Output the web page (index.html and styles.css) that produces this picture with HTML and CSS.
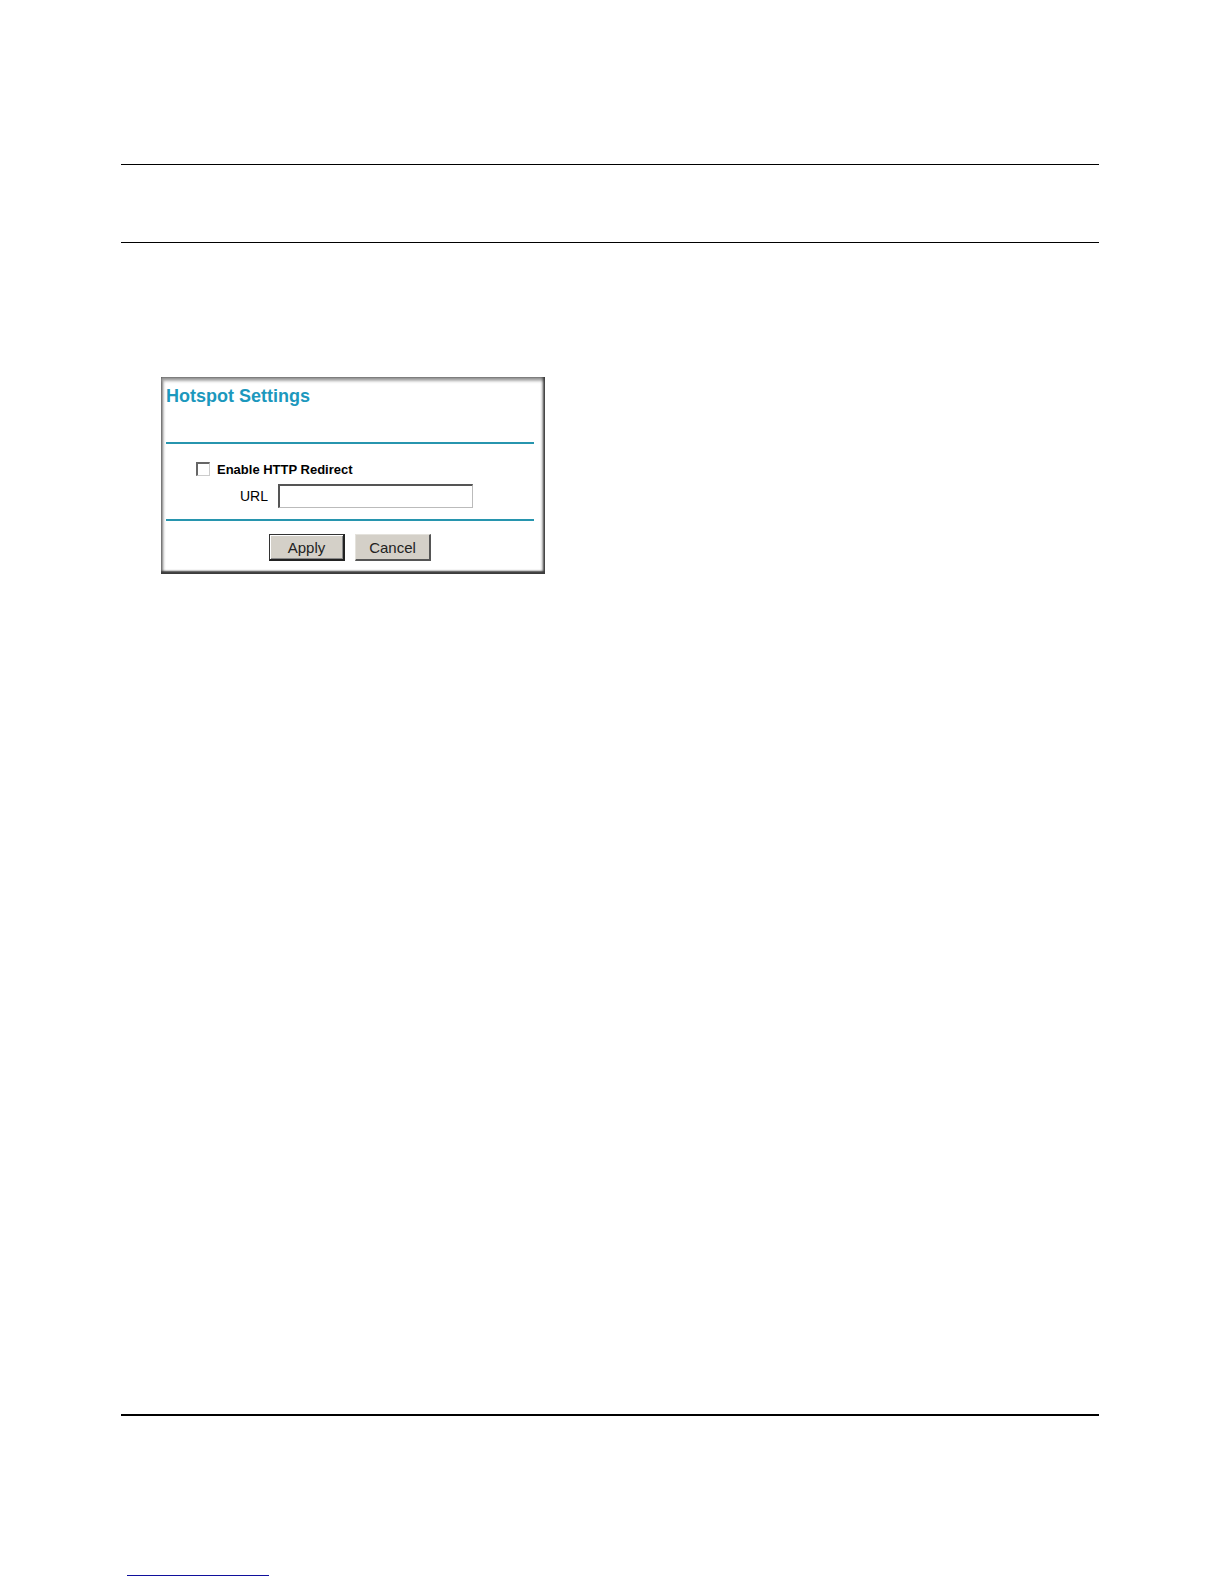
FILE: index.html
```html
<!DOCTYPE html>
<html lang="en">
<head>
    <meta charset="UTF-8">
    <meta name="viewport" content="width=device-width, initial-scale=1.0">
    <title>Hotspot Settings</title>
    <link rel="stylesheet" href="styles.css">
</head>
<body>

<div class="page">
    <header class="page-header"></header>

    <main class="content">
        <form class="panel">
            <h1>Hotspot Settings</h1>

            <div class="fields">
                <div class="check-row">
                    <input type="checkbox" id="redirect" class="checkbox">
                    <label for="redirect">Enable HTTP Redirect</label>
                </div>
                <div class="url-row">
                    <label for="url">URL</label>
                    <input type="text" id="url" class="url-input">
                </div>
            </div>

            <div class="buttons">
                <button type="button" class="default">Apply</button>
                <button type="button">Cancel</button>
            </div>
        </form>
    </main>

    <footer class="page-footer">
        <div class="link-line"></div>
    </footer>
</div>

</body>
</html>
```
FILE: styles.css
```css
* {
    box-sizing: border-box;
}
body {
    margin: 0;
    font-family: "Liberation Sans", Arial, sans-serif;
    background-color: white;
    color: black;
}
.page {
    display: flex;
    flex-direction: column;
    min-height: 100vh;
    padding: 164px 125px 8px 121px;
}
.page-header {
    height: 79px;
    border-top: 1px solid black;
    border-bottom: 1px solid black;
}
.content {
    flex: 1;
    padding: 134px 40px 40px;
}

/* Settings panel */
.panel {
    width: 100%;
    max-width: 384px;
    padding: 8px 11px 13px 5px;
    box-shadow: inset 0 -3px 2px #3c3c3c, inset -2px 0 3px #333, inset 0 4px 3px #a8a8a8, inset 2px 0 3px #777;
}
h1 {
    margin: 0;
    height: 57px;
    font-size: 18px;
    line-height: 22px;
    color: #1c98bd;
}
.fields {
    padding: 17px 0 11px 30px;
    border-top: 2px solid #2795ae;
    border-bottom: 2px solid #2795ae;
    font-size: 14px;
}
.check-row {
    display: flex;
    align-items: center;
    gap: 7px;
    height: 16px;
    font-size: 13px;
    font-weight: bold;
}
.checkbox {
    appearance: none;
    width: 14px;
    height: 14px;
    margin: 0;
    border: 1px solid #ccc;
    border-top: 2px solid #666;
    border-left: 2px solid #666;
}
.checkbox:checked {
    background-color: #333;
}
.url-row {
    display: flex;
    align-items: center;
    gap: 10px;
    margin-top: 7px;
    padding-left: 44px;
}
.url-input {
    width: 195px;
    height: 24px;
    padding: 2px 4px;
    border: 1px solid #bbb;
    border-top: 2px solid #555;
    border-left: 2px solid #555;
    background-color: white;
}
.buttons {
    display: flex;
    justify-content: center;
    gap: 10px;
    padding-top: 13px;
}
button {
    width: 76px;
    height: 27px;
    padding: 0;
    border: 1px solid #e4e2dc;
    border-right: 2px solid #555;
    border-bottom: 2px solid #555;
    background-color: #d4d0c8;
    font-family: inherit;
    font-size: 15px;
    color: #222;
}
.default {
    border: 1px solid #333;
    border-right: 2px solid #222;
    border-bottom: 2px solid #222;
    box-shadow: inset 1px 1px white, inset -1px -1px #888;
}

.page-footer {
    height: 162px;
    padding: 159px 6px 0;
    border-top: 2px solid black;
}
.link-line {
    max-width: 142px;
    height: 1px;
    background-color: #10109c;
}
```
